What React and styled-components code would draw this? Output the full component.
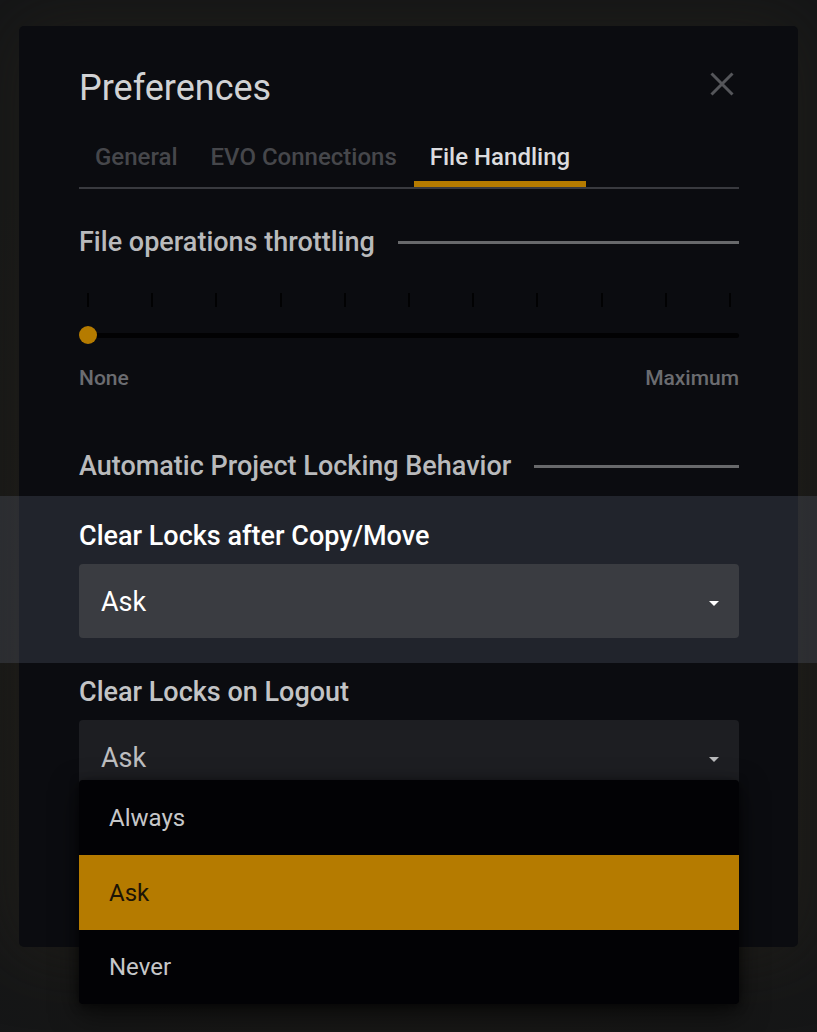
import React from 'react';
import styled, { createGlobalStyle } from 'styled-components';

const Global = createGlobalStyle`
  html, body { margin: 0; padding: 0; }
  body {
    background: #151617;
    font-family: Roboto, "Liberation Sans", Arial, sans-serif;
  }
`;

const Page = styled.div`
  position: relative;
  width: 817px;
  height: 1032px;
  overflow: hidden;
  box-sizing: border-box;
  padding: 26px 19px 0;
  background:
    radial-gradient(ellipse 70% 60% at 50% 62%, #1d1c18 0%, #1a1917 45%, #151617 100%);
`;

const Modal = styled.div`
  position: relative;
  box-sizing: border-box;
  width: 779px;
  height: 921px;
  padding: 40px 59px 0 60px;
  background: #0b0c10;
  border-radius: 5px;
  box-shadow: 0 0 70px rgba(40, 37, 28, 0.55);
`;

const Header = styled.div`
  display: flex;
  align-items: center;
  justify-content: space-between;
  height: 44px;
`;

const Title = styled.h1`
  margin: 0;
  font-size: 36px;
  line-height: 44px;
  font-weight: 400;
  color: #d1d2d4;
`;

const CloseButton = styled.button`
  display: flex;
  align-items: center;
  justify-content: center;
  width: 30px;
  height: 30px;
  margin-right: 2px;
  margin-top: -8px;
  padding: 0;
  border: none;
  background: transparent;
`;

const TabList = styled.div`
  display: flex;
  margin-top: 33px;
  border-bottom: 2px solid #393a3f;
`;

const Tab = styled.div`
  position: relative;
  padding: 0 16px 16px;
  margin-right: 1px;
  font-size: 24px;
  line-height: 28px;
  font-weight: 500;
  color: ${p => (p.$active ? '#dcdcde' : '#46474b')};
  &::after {
    content: '';
    display: ${p => (p.$active ? 'block' : 'none')};
    position: absolute;
    left: 0;
    right: 0;
    bottom: 0;
    height: 6px;
    background: #b57b00;
  }
`;

const SectionHeader = styled.div`
  display: flex;
  align-items: center;
  gap: 23px;
  margin-top: ${p => p.$mt}px;
`;

const SectionTitle = styled.h2`
  margin: 0;
  padding-top: 1px;
  font-size: 27px;
  line-height: 30px;
  font-weight: 500;
  color: #b9babc;
  white-space: nowrap;
`;

const SectionRule = styled.div`
  flex: 1;
  height: 3px;
  margin-top: 1px;
  background: #68696b;
`;

const Ticks = styled.div`
  display: flex;
  justify-content: space-between;
  margin-top: 36px;
  padding: 0 8px;
  width: 644px;
  box-sizing: content-box;
`;

const Tick = styled.span`
  width: 2px;
  height: 14px;
  background: #020203;
`;

const SliderRow = styled.div`
  display: flex;
  align-items: center;
  height: 24px;
  margin-top: 16px;
  padding-left: 9px;
`;

const Track = styled.div`
  position: relative;
  flex: 1;
  height: 5px;
  border-radius: 3px;
  background: #020203;
`;

const Thumb = styled.span`
  position: absolute;
  left: -9px;
  top: 50%;
  width: 18px;
  height: 18px;
  margin-top: -9px;
  border-radius: 50%;
  background: #b57b00;
`;

const SliderLabels = styled.div`
  display: flex;
  justify-content: space-between;
  margin-top: 19px;
  font-size: 21px;
  line-height: 24px;
  font-weight: 500;
  color: #6b6c70;
`;

const Field = styled.div`
  position: relative;
  margin-top: ${p => p.$mt}px;
  ${p =>
    p.$highlight &&
    `
    z-index: 0;
    &::before {
      content: '';
      position: absolute;
      z-index: -1;
      left: -79px;
      right: -78px;
      top: -24px;
      bottom: -25px;
      background: rgba(90, 97, 115, 0.29);
    }
  `}
`;

const FieldLabel = styled.div`
  padding-top: 1px;
  font-size: 27px;
  line-height: 30px;
  font-weight: 500;
  color: ${p => (p.$highlight ? '#ffffff' : '#c3c4c6')};
`;

const Select = styled.div`
  position: relative;
  display: flex;
  align-items: center;
  justify-content: space-between;
  height: 74px;
  margin-top: 13px;
  padding: 0 20px 0 22px;
  border-radius: 4px;
  background: ${p => (p.$highlight ? '#3a3c41' : '#1d1e22')};
  font-size: 27px;
  line-height: 30px;
  font-weight: 400;
  color: ${p => (p.$highlight ? '#ffffff' : '#bdbec0')};
`;

const SelectValue = styled.span`
  padding-top: 2px;
`;

const Caret = styled.span`
  width: 0;
  height: 0;
  margin-top: 5px;
  border-left: 5px solid transparent;
  border-right: 5px solid transparent;
  border-top: 5px solid ${p => (p.$highlight ? '#ffffff' : '#b9babc')};
`;

const Menu = styled.ul`
  position: absolute;
  left: 0;
  right: 0;
  top: 60px;
  z-index: 5;
  display: flex;
  flex-direction: column;
  margin: 0;
  padding: 0;
  list-style: none;
  border-radius: 4px;
  background: #020205;
  box-shadow: 0 10px 28px rgba(0, 0, 0, 0.55), 0 2px 8px rgba(0, 0, 0, 0.5);
  overflow: hidden;
`;

const MenuItem = styled.li`
  display: flex;
  align-items: center;
  height: ${p => p.$h}px;
  padding-left: 30px;
  font-size: 24px;
  line-height: 28px;
  font-weight: 400;
  color: ${p => (p.$selected ? '#1c1406' : '#c6c7c9')};
  background: ${p => (p.$selected ? '#b57b00' : 'transparent')};
`;

const CloseIcon = () => (
  <svg width="24" height="24" viewBox="0 0 24 24" aria-hidden="true">
    <path d="M1.5 1.5 L22.5 22.5 M22.5 1.5 L1.5 22.5" stroke="#55565a" strokeWidth="3" fill="none" />
  </svg>
);

export default function App() {
  const ticks = Array.from({ length: 11 }, (_, i) => i);
  return (
    <Page>
      <Global />
      <Modal>
        <Header>
          <Title>Preferences</Title>
          <CloseButton aria-label="Close">
            <CloseIcon />
          </CloseButton>
        </Header>

        <TabList>
          <Tab>General</Tab>
          <Tab>EVO Connections</Tab>
          <Tab $active>File Handling</Tab>
        </TabList>

        <SectionHeader $mt={37}>
          <SectionTitle>File operations throttling</SectionTitle>
          <SectionRule />
        </SectionHeader>

        <Ticks>
          {ticks.map(t => (
            <Tick key={t} />
          ))}
        </Ticks>
        <SliderRow>
          <Track>
            <Thumb />
          </Track>
        </SliderRow>
        <SliderLabels>
          <span>None</span>
          <span>Maximum</span>
        </SliderLabels>

        <SectionHeader $mt={60}>
          <SectionTitle>Automatic Project Locking Behavior</SectionTitle>
          <SectionRule />
        </SectionHeader>

        <Field $mt={39} $highlight>
          <FieldLabel $highlight>Clear Locks after Copy/Move</FieldLabel>
          <Select $highlight>
            <SelectValue>Ask</SelectValue>
            <Caret $highlight />
          </Select>
        </Field>

        <Field $mt={38}>
          <FieldLabel>Clear Locks on Logout</FieldLabel>
          <Select>
            <SelectValue>Ask</SelectValue>
            <Caret />
            <Menu>
              <MenuItem $h={75}>Always</MenuItem>
              <MenuItem $h={75} $selected>Ask</MenuItem>
              <MenuItem $h={74}>Never</MenuItem>
            </Menu>
          </Select>
        </Field>
      </Modal>
    </Page>
  );
}
